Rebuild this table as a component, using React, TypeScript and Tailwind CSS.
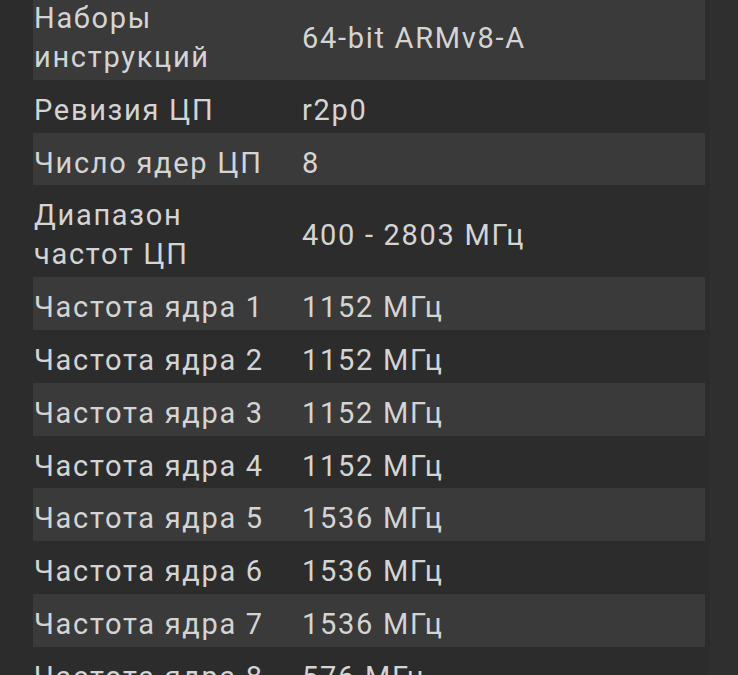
type Row = {
  label: string;
  value: string;
};

const rows: Row[] = [
  { label: "Наборы инструкций", value: "64-bit ARMv8-A" },
  { label: "Ревизия ЦП", value: "r2p0" },
  { label: "Число ядер ЦП", value: "8" },
  { label: "Диапазон частот ЦП", value: "400 - 2803 МГц" },
  { label: "Частота ядра 1", value: "1152 МГц" },
  { label: "Частота ядра 2", value: "1152 МГц" },
  { label: "Частота ядра 3", value: "1152 МГц" },
  { label: "Частота ядра 4", value: "1152 МГц" },
  { label: "Частота ядра 5", value: "1536 МГц" },
  { label: "Частота ядра 6", value: "1536 МГц" },
  { label: "Частота ядра 7", value: "1536 МГц" },
  { label: "Частота ядра 8", value: "576 МГц" },
];

export default function App() {
  return (
    <div className="flex h-[675px] w-full overflow-hidden bg-[#2f2f2f]">
      <div
        className="w-[710px] bg-[#2c2c2c] pl-[33px] pr-[5px]"
        style={{ fontFamily: "Roboto, 'Noto Sans', sans-serif" }}
      >
        <div className="-mt-[12px] flex flex-col">
          {rows.map((row, index) => (
            <div
              key={index}
              className={`flex items-center pl-[1px] pt-[11px] pb-[2.8px] text-[29px] leading-[39px] tracking-[1.7px] text-[#d4d4d4] ${
                index % 2 === 0 ? "bg-[#3a3a3a]" : ""
              }`}
            >
              <div className="w-[268px] shrink-0 pr-[28px]">{row.label}</div>
              <div className="whitespace-nowrap">{row.value}</div>
            </div>
          ))}
        </div>
      </div>
    </div>
  );
}
